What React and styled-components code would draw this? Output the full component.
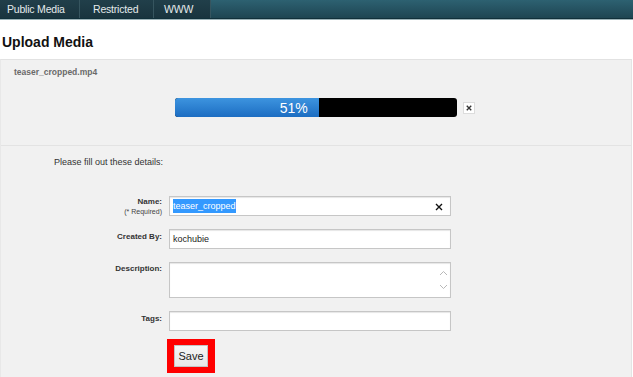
import React from "react";
import styled, { createGlobalStyle } from "styled-components";

const Global = createGlobalStyle`
  html, body { margin: 0; padding: 0; background: #fff; }
  body { font-family: "Liberation Sans", Arial, sans-serif; }
  * { box-sizing: border-box; }
`;

const Page = styled.div`
  width: 633px;
  height: 377px;
  overflow: hidden;
  background: #fff;
`;

const Nav = styled.nav`
  display: flex;
  height: 19px;
  background: linear-gradient(#2d6171, #1e4552);
  border-bottom: 1px solid #10303a;
  box-shadow: 0 1px 0 #9db3b8;
`;

const Tab = styled.div`
  width: ${(p) => p.$w}px;
  display: flex;
  align-items: center;
  padding-left: ${(p) => p.$pl}px;
  background: linear-gradient(#213f4a, #19343e);
  border-right: 1px solid #36555f;
  color: #e4eaec;
  font-size: 10.5px;
  letter-spacing: -0.2px;
`;

const Title = styled.h1`
  margin: 0;
  padding: 15px 0 8px 2px;
  font-size: 14px;
  line-height: 17px;
  font-weight: bold;
  color: #111;
`;

const Panel = styled.div`
  width: 632px;
  background: #f1f1f1;
  border-top: 1px solid #e2e2e2;
  border-left: 1px solid #e8e8e8;
  border-right: 1px solid #e4e4e4;
  min-height: 320px;
`;

const UploadSection = styled.section`
  padding: 7px 0 28px 0;
  border-bottom: 1px solid #e3e3e3;
`;

const FileName = styled.div`
  padding-left: 13px;
  font-size: 8.5px;
  line-height: 11px;
  font-weight: bold;
  color: #6a6a6a;
`;

const ProgressRow = styled.div`
  margin-top: 20px;
  display: grid;
  grid-template-columns: 1fr 282px 1fr;
  align-items: center;
`;

const Progress = styled.div`
  grid-column: 2;
  height: 19px;
  background: #000;
  border-radius: 3px;
  overflow: hidden;
  display: flex;
`;

const Fill = styled.div`
  height: 100%;
  background: linear-gradient(#3d94df, #1c6dc2);
  display: flex;
  align-items: center;
  justify-content: flex-end;
  padding-right: 11px;
  color: #fff;
  font-size: 14px;
`;

const CancelBtn = styled.button`
  justify-self: start;
  margin-left: 6px;
  width: 12px;
  height: 12px;
  padding: 0;
  border: 1px solid #dcdcdc;
  background: #fff;
  display: flex;
  align-items: center;
  justify-content: center;
`;

const FormSection = styled.section`
  padding: 11px 0 0 0;
`;

const Intro = styled.div`
  padding-left: 53px;
  font-size: 9px;
  line-height: 11px;
  color: #333;
`;

const FormGrid = styled.div`
  margin-top: 28px;
  display: grid;
  grid-template-columns: 161px 282px;
  column-gap: 7px;
  row-gap: 13px;
`;

const Label = styled.div`
  text-align: right;
  padding-top: ${(p) => p.$pt ?? 3}px;
  font-size: 8px;
  line-height: 10px;
  font-weight: bold;
  color: #333;
`;

const Sub = styled.div`
  font-size: 7px;
  line-height: 9px;
  font-weight: normal;
  color: #444;
`;

const Field = styled.div`
  position: relative;
  height: ${(p) => p.$h || 20}px;
  background: #fff;
  border: 1px solid #c6c6c6;
  box-shadow: inset 0 1px 1px #e6e6e6;
  display: flex;
  align-items: ${(p) => (p.$top ? "flex-start" : "center")};
  padding: 0 3px;
  font-size: 9px;
  color: #222;
`;

const Selected = styled.span`
  background: #3399ff;
  color: #fff;
  padding: 2px 0;
`;

const ClearIcon = styled.svg`
  position: absolute;
  right: 7px;
  top: 6px;
`;

const Scroll = styled.div`
  position: absolute;
  right: 2px;
  top: 7px;
  bottom: 7px;
  display: flex;
  flex-direction: column;
  justify-content: space-between;
`;

const SaveWrap = styled.div`
  margin: 8px 0 0 166px;
  width: 48px;
  border-style: solid;
  border-color: #ff0000;
  border-width: 6px 7px;
`;

const SaveButton = styled.button`
  display: block;
  width: 34px;
  height: 22px;
  padding: 0;
  background: linear-gradient(#f6f6f6, #e8e8e8);
  border: 1px solid #c4c4c4;
  font-family: "Liberation Sans", Arial, sans-serif;
  font-size: 11px;
  color: #222;
`;

const Cross = ({ size = 7, sw = 1.6, color = "#111" }) => (
  <svg width={size} height={size} viewBox="0 0 8 8">
    <path d="M1 1L7 7M7 1L1 7" stroke={color} strokeWidth={sw} />
  </svg>
);

export default function App() {
  return (
    <Page>
      <Global />
      <Nav>
        <Tab $w={80} $pl={7}>Public Media</Tab>
        <Tab $w={74} $pl={13}>Restricted</Tab>
        <Tab $w={57} $pl={10}>WWW</Tab>
      </Nav>
      <Title>Upload Media</Title>
      <Panel>
        <UploadSection>
          <FileName>teaser_cropped.mp4</FileName>
          <ProgressRow>
            <Progress>
              <Fill style={{ width: "51%" }}>51%</Fill>
            </Progress>
            <CancelBtn aria-label="Cancel">
              <Cross size={6} sw={1.8} color="#333" />
            </CancelBtn>
          </ProgressRow>
        </UploadSection>
        <FormSection>
          <Intro>Please fill out these details:</Intro>
          <FormGrid>
            <Label $pt={1}>
              Name:
              <Sub>(* Required)</Sub>
            </Label>
            <Field>
              <Selected>teaser_cropped</Selected>
              <ClearIcon width="8" height="8" viewBox="0 0 8 8">
                <path d="M1 1L7 7M7 1L1 7" stroke="#111" strokeWidth="1.4" />
              </ClearIcon>
            </Field>
            <Label>Created By:</Label>
            <Field>kochubie</Field>
            <Label $pt={2}>Description:</Label>
            <Field $h={36} $top>
              <Scroll>
                <svg width="9" height="6" viewBox="0 0 9 6">
                  <path d="M1 5L4.5 1.5L8 5" stroke="#b8b8b8" strokeWidth="1" fill="none" />
                </svg>
                <svg width="9" height="6" viewBox="0 0 9 6">
                  <path d="M1 1L4.5 4.5L8 1" stroke="#b8b8b8" strokeWidth="1" fill="none" />
                </svg>
              </Scroll>
            </Field>
            <Label>Tags:</Label>
            <Field />
          </FormGrid>
          <SaveWrap>
            <SaveButton>Save</SaveButton>
          </SaveWrap>
        </FormSection>
      </Panel>
    </Page>
  );
}
